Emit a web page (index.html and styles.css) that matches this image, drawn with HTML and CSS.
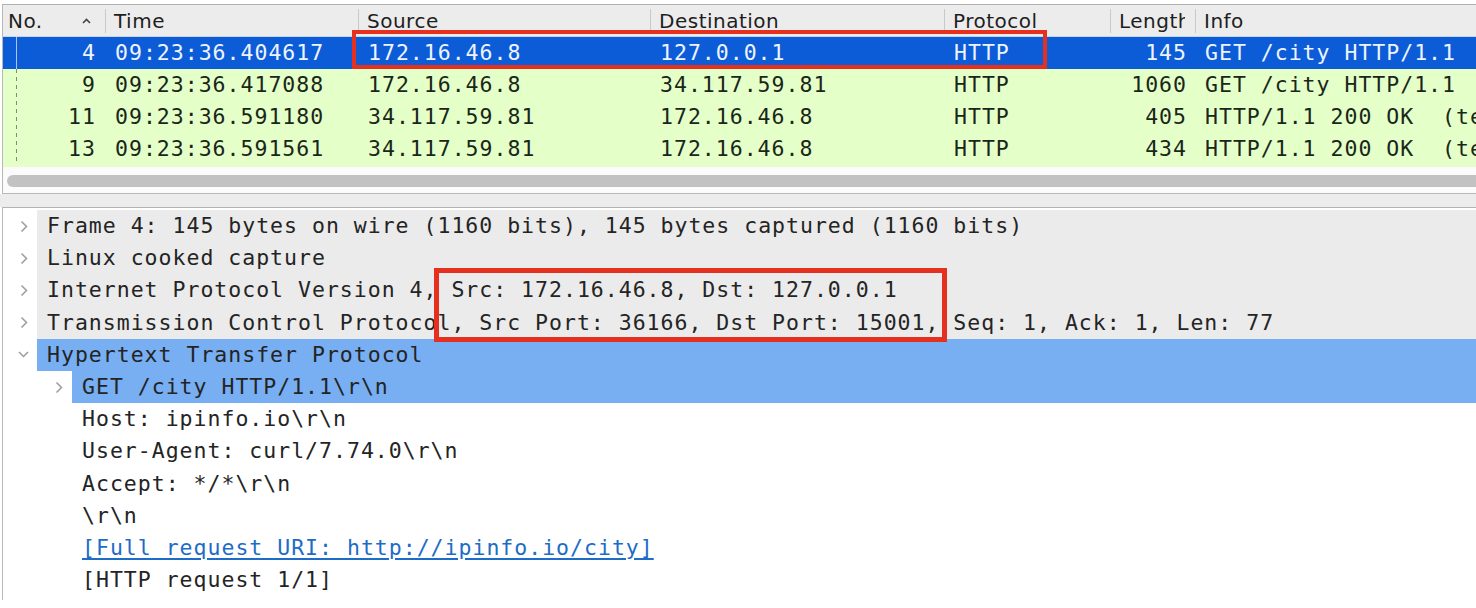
FILE: index.html
```html
<!DOCTYPE html>
<html>
<head>
<meta charset="utf-8">
<link rel="stylesheet" href="styles.css">
</head>
<body>
<div class="list">
  <div class="hdr">
    <div class="hc no"><span>No.</span><svg class="sort" width="9" height="6" viewBox="0 0 9 6"><path d="M1 5 L4.5 1.5 L8 5" fill="none" stroke="#444" stroke-width="1.6"/></svg></div>
    <div class="hc">Time</div>
    <div class="hc">Source</div>
    <div class="hc">Destination</div>
    <div class="hc">Protocol</div>
    <div class="hc"><span class="clip">Length</span></div>
    <div class="hc">Info</div>
  </div>
  <div class="row sel">
    <div class="c no">4</div>
    <div class="c">09:23:36.404617</div>
    <div class="c">172.16.46.8</div>
    <div class="c">127.0.0.1</div>
    <div class="c">HTTP</div>
    <div class="c len">145</div>
    <div class="c">GET /city HTTP/1.1</div>
  </div>
  <div class="row">
    <div class="c no">9</div>
    <div class="c">09:23:36.417088</div>
    <div class="c">172.16.46.8</div>
    <div class="c">34.117.59.81</div>
    <div class="c">HTTP</div>
    <div class="c len">1060</div>
    <div class="c">GET /city HTTP/1.1</div>
  </div>
  <div class="row">
    <div class="c no">11</div>
    <div class="c">09:23:36.591180</div>
    <div class="c">34.117.59.81</div>
    <div class="c">172.16.46.8</div>
    <div class="c">HTTP</div>
    <div class="c len">405</div>
    <div class="c">HTTP/1.1 200 OK  (text/plain)</div>
  </div>
  <div class="row">
    <div class="c no">13</div>
    <div class="c">09:23:36.591561</div>
    <div class="c">34.117.59.81</div>
    <div class="c">172.16.46.8</div>
    <div class="c">HTTP</div>
    <div class="c len">434</div>
    <div class="c">HTTP/1.1 200 OK  (text/plain)</div>
  </div>
  <div class="fill"></div>
  <div class="hscroll"><div class="thumb"></div></div>
</div>
<div class="splitter"></div>
<div class="detail">
  <div class="node top"><span class="tw"><svg width="8" height="13" viewBox="0 0 8 13"><path d="M1.5 1.5 L6.5 6.5 L1.5 11.5" fill="none" stroke="#9c9c9c" stroke-width="1.5"/></svg></span><span class="lbl">Frame 4: 145 bytes on wire (1160 bits), 145 bytes captured (1160 bits)</span></div>
  <div class="node top"><span class="tw"><svg width="8" height="13" viewBox="0 0 8 13"><path d="M1.5 1.5 L6.5 6.5 L1.5 11.5" fill="none" stroke="#9c9c9c" stroke-width="1.5"/></svg></span><span class="lbl">Linux cooked capture</span></div>
  <div class="node top"><span class="tw"><svg width="8" height="13" viewBox="0 0 8 13"><path d="M1.5 1.5 L6.5 6.5 L1.5 11.5" fill="none" stroke="#9c9c9c" stroke-width="1.5"/></svg></span><span class="lbl">Internet Protocol Version 4, Src: 172.16.46.8, Dst: 127.0.0.1</span></div>
  <div class="node top"><span class="tw"><svg width="8" height="13" viewBox="0 0 8 13"><path d="M1.5 1.5 L6.5 6.5 L1.5 11.5" fill="none" stroke="#9c9c9c" stroke-width="1.5"/></svg></span><span class="lbl">Transmission Control Protocol, Src Port: 36166, Dst Port: 15001, Seq: 1, Ack: 1, Len: 77</span></div>
  <div class="node hl"><span class="tw open"><svg width="11" height="7" viewBox="0 0 11 7"><path d="M1 1 L5.5 5.5 L10 1" fill="none" stroke="#9c9c9c" stroke-width="1.5"/></svg></span><span class="lbl">Hypertext Transfer Protocol</span></div>
  <div class="node child hl"><span class="tw"><svg width="8" height="13" viewBox="0 0 8 13"><path d="M1.5 1.5 L6.5 6.5 L1.5 11.5" fill="none" stroke="#9c9c9c" stroke-width="1.5"/></svg></span><span class="lbl">GET /city HTTP/1.1\r\n</span></div>
  <div class="node child"><span class="tw"></span><span class="lbl">Host: ipinfo.io\r\n</span></div>
  <div class="node child"><span class="tw"></span><span class="lbl">User-Agent: curl/7.74.0\r\n</span></div>
  <div class="node child"><span class="tw"></span><span class="lbl">Accept: */*\r\n</span></div>
  <div class="node child"><span class="tw"></span><span class="lbl">\r\n</span></div>
  <div class="node child"><span class="tw"></span><span class="lbl"><span class="link">[Full request URI: http://ipinfo.io/city]</span></span></div>
  <div class="node child"><span class="tw"></span><span class="lbl">[HTTP request 1/1]</span></div>
</div>
<div class="mark mark-list"></div>
<div class="mark mark-detail"></div>
</body>
</html>
```

FILE: styles.css
```css
* { box-sizing: border-box; }
html, body {
  margin: 0;
  padding: 0;
  background: #ffffff;
  overflow: hidden;
}
body {
  width: 1476px;
  height: 608px;
  position: relative;
  font-family: "DejaVu Sans Mono", monospace;
}

/* ---------- packet list ---------- */
.list {
  margin: 4px 0 0 2px;
  border-top: 1px solid #b1b1b1;
  border-left: 1px solid #b8b8b8;
  border-bottom: 1px solid #b8b8b8;
}
.hdr, .row {
  display: grid;
  grid-template-columns: 102px 253px 292px 294px 166px 85px minmax(0, 1fr);
}
.hdr {
  height: 32px;
  padding: 4px 0 3px;
  background: #ececec;
  border-bottom: 1px solid #c4d7ef;
  font-family: "DejaVu Sans", sans-serif;
  font-size: 20px;
  letter-spacing: 0.5px;
  color: #1e1e1e;
}
.hc {
  display: flex;
  align-items: center;
  padding-left: 8px;
  border-left: 1px solid #c9c9c9;
  white-space: nowrap;
  overflow: hidden;
}
.hc.no {
  border-left: none;
  padding-left: 5px;
  padding-right: 14px;
  justify-content: space-between;
}
.hc .clip {
  display: block;
  overflow: hidden;
  width: 66px;
}
.sort { margin-top: -1px; }

.row {
  height: 32px;
  line-height: 32px;
  font-size: 21.5px;
  letter-spacing: 1px;
  white-space: pre;
  background: #e4ffc7;
  color: #1a261a;
}
.c {
  overflow: hidden;
  padding-left: 10px;
}
.c.no {
  text-align: right;
  padding-left: 0;
  padding-right: 9px;
  background: repeating-linear-gradient(to bottom, #7f8f74 0 4px, transparent 4px 8px) no-repeat 13px 0 / 1px 100%;
}
.c.len {
  text-align: right;
  padding-left: 0;
  padding-right: 8px;
}
.row.sel {
  background: #0b5cd6;
  color: #eef4ff;
}
.row.sel .c.no {
  background: linear-gradient(#a9c7f2, #a9c7f2) no-repeat 13px 0 / 1px 100%;
}
.fill {
  height: 2px;
  background: #e4ffc7;
}
.hscroll {
  height: 26px;
  padding: 8px 0 6px 4px;
  background: #fbfbfb;
}
.thumb {
  height: 12px;
  background: #c2c2c2;
  border-radius: 6px 0 0 6px;
}

/* ---------- splitter ---------- */
.splitter {
  height: 13px;
  background: #ececec;
}

/* ---------- detail tree ---------- */
.detail {
  margin-left: 2px;
  height: 393px;
  padding-top: 2px;
  border-top: 1px solid #b3b3b3;
  border-left: 1px solid #b8b8b8;
}
.node {
  display: flex;
  height: 32.2px;
  line-height: 32.2px;
  font-size: 21.5px;
  letter-spacing: 1px;
  color: #242424;
  white-space: pre;
}
.node.child { padding-left: 35px; }
.tw {
  width: 34px;
  flex: none;
  display: flex;
  align-items: center;
  padding-left: 17px;
}
.tw.open { padding-left: 15px; }
.lbl {
  flex: 1;
  min-width: 0;
  overflow: hidden;
  padding-left: 10px;
}
.node.top .lbl { background: #ebebeb; }
.node.hl .lbl { background: #78aef2; }
.link {
  color: #1d6cc6;
  text-decoration: underline;
  text-underline-offset: 3px;
}

/* ---------- annotation boxes ---------- */
.mark {
  position: absolute;
  border: 4px solid #e6301f;
}
.mark-list {
  left: 352px;
  top: 30px;
  width: 695px;
  height: 39px;
}
.mark-detail {
  left: 434px;
  top: 268px;
  width: 513px;
  height: 74px;
  border-width: 5px;
}
```
